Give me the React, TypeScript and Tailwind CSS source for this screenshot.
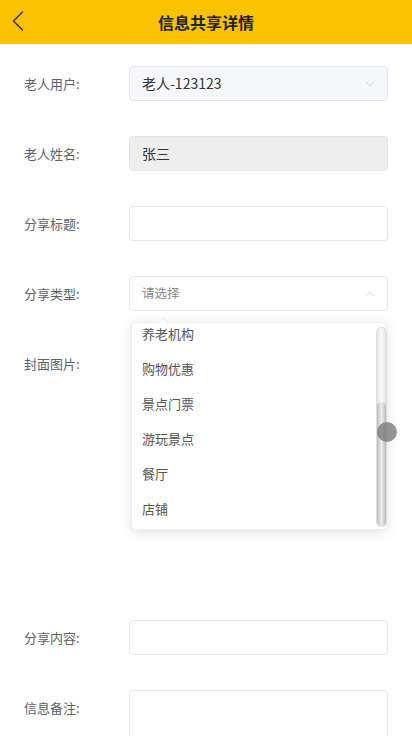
import { ChevronDown, ChevronUp, ChevronLeft } from "lucide-react"

const font = { fontFamily: '"Noto Sans CJK SC", "Noto Sans", sans-serif' }

const options = ["养老机构", "购物优惠", "景点门票", "游玩景点", "餐厅", "店铺"]

function Row({ label, children }: { label: string; children: React.ReactNode }) {
  return (
    <div className="flex items-start pr-6 mb-[35px]">
      <div className="w-[129px] pl-6 h-[35px] flex items-center text-[13px] text-[#606266] shrink-0">
        {label}
      </div>
      <div className="flex-1">{children}</div>
    </div>
  )
}

export default function App() {
  return (
    <div className="relative w-[412px] h-[736px] overflow-hidden bg-white" style={font}>
      <div className="h-11 bg-[#f9c300] flex items-center relative">
        <ChevronLeft className="absolute left-0 top-[3px] w-9 h-9 text-[#333]" strokeWidth={1} />
        <div className="flex-1 text-center text-[16px] font-bold text-[#222]">信息共享详情</div>
      </div>

      <div className="pt-[22px]">
        <Row label="老人用户:">
          <div className="h-[35px] rounded bg-[#f5f7fa] border border-[#e4e7ed] flex items-center justify-between pl-3 pr-2.5 text-[14px] text-[#333]">
            <span>老人-123123</span>
            <ChevronDown className="w-[14px] h-[14px] text-[#c0c4cc]" strokeWidth={1.2} />
          </div>
        </Row>
        <Row label="老人姓名:">
          <div className="h-[35px] rounded bg-[#eeeeee] border border-[#e4e4e4] flex items-center pl-3 text-[14px] text-[#333]">
            张三
          </div>
        </Row>
        <Row label="分享标题:">
          <div className="h-[35px] rounded border border-[#e4e7ed] bg-white" />
        </Row>
        <Row label="分享类型:">
          <div className="h-[35px] rounded border border-[#e4e7ed] bg-white flex items-center justify-between pl-3 pr-2.5 text-[12.5px] text-[#888]">
            <span>请选择</span>
            <ChevronUp className="w-[14px] h-[14px] text-[#c0c4cc]" strokeWidth={1.2} />
          </div>
        </Row>
        <Row label="封面图片:">
          <div className="h-[239px]" />
        </Row>
        <Row label="分享内容:">
          <div className="h-[35px] rounded border border-[#e4e7ed] bg-white" />
        </Row>
        <Row label="信息备注:">
          <div className="h-[70px] rounded border border-[#e4e7ed] bg-white" />
        </Row>
      </div>

      <div className="absolute left-[131px] top-[322px] w-[256px] h-[208px] bg-white rounded shadow-[0_2px_12px_rgba(0,0,0,0.12)] border border-[#eeeeee]">
        <div className="absolute -top-[4px] left-[27px] w-2 h-2 bg-white rotate-45 border-l border-t border-[#eeeeee]" />
        <div className="h-full overflow-hidden">
          <div className="-mt-[7px]">
            {options.map((o) => (
              <div key={o} className="h-[35px] flex items-center pl-[10px] text-[13px] text-[#555]">
                {o}
              </div>
            ))}
          </div>
        </div>
        <div className="absolute left-[244px] top-[4px] w-[11px] h-[200px] rounded-full bg-gradient-to-r from-[#e6e6e6] via-[#fafafa] to-[#e2e2e2] border border-[#dcdcdc]">
          <div className="absolute left-0 right-0 top-[74px] bottom-0 rounded-full bg-gradient-to-r from-[#bdbdbd] via-[#eeeeee] to-[#b8b8b8]" />
        </div>
      </div>
      <div className="absolute left-[377px] top-[422px] w-5 h-5 rounded-full bg-[#7a7a7a]/80" />
    </div>
  )
}
